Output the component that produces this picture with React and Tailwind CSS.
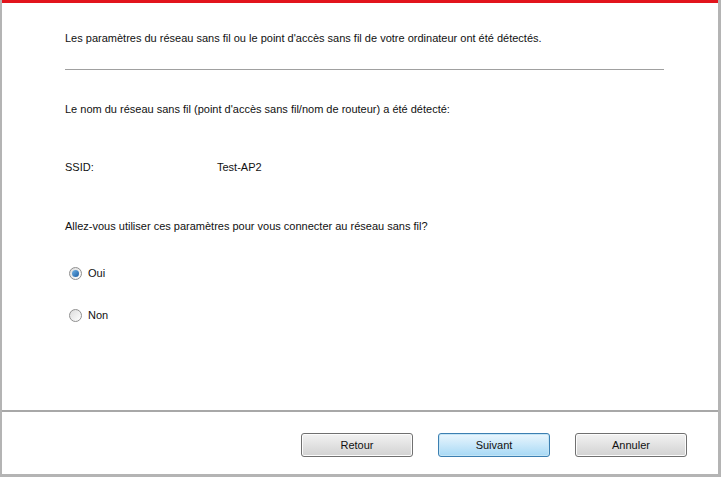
export default function App() {
  const font = { fontFamily: '"Liberation Sans", Arial, sans-serif' };
  const Radio = ({ checked }) => (
    <span className="relative inline-block w-[13px] h-[13px] rounded-full border border-[#8f8f8f] bg-gradient-to-br from-[#dcdcdc] to-[#ffffff]">
      {checked && (
        <span className="absolute left-[2px] top-[2px] w-[7px] h-[7px] rounded-full bg-gradient-to-br from-[#6fb2e6] to-[#1a5ea3]" />
      )}
    </span>
  );
  const Btn = ({ children, primary }) => (
    <div
      className={
        "w-[112px] h-[24px] flex items-center justify-center rounded-[3px] text-[11px] text-[#111] " +
        (primary
          ? "border border-[#3c7fb1] bg-gradient-to-b from-[#eaf6fd] to-[#a7d9f5] shadow-[inset_0_0_0_1px_#c4e5f6]"
          : "border border-[#707070] bg-gradient-to-b from-[#f2f2f2] to-[#d2d2d2] shadow-[inset_0_0_0_1px_#fcfcfc]")
      }
    >
      {children}
    </div>
  );
  return (
    <div className="w-[721px] h-[477px] bg-[#b4b4b4] pl-[2px] pr-[3px] pb-[3px] flex flex-col" style={font}>
      <div className="h-[3px] bg-[#e2141c]" />
      <div className="flex-1 bg-white flex flex-col text-[11px] text-[#111]">
        <div className="h-[407px] flex flex-col px-[63px]">
          <div className="mt-[28px] leading-[14px]">Les paramètres du réseau sans fil ou le point d'accès sans fil de votre ordinateur ont été détectés.</div>
          <div className="mt-[24px] h-px bg-[#a0a0a0] w-[599px]" />
          <div className="mt-[32px] leading-[14px]">Le nom du réseau sans fil (point d'accès sans fil/nom de routeur) a été détecté:</div>
          <div className="mt-[44px] leading-[14px] flex">
            <span className="w-[152px]">SSID:</span>
            <span>Test-AP2</span>
          </div>
          <div className="mt-[45px] leading-[14px]">Allez-vous utiliser ces paramètres pour vous connecter au réseau sans fil?</div>
          <div className="mt-[33px] flex items-center gap-[6px] leading-[14px] ml-[4px]">
            <Radio checked />
            <span>Oui</span>
          </div>
          <div className="mt-[28px] flex items-center gap-[6px] leading-[14px] ml-[4px]">
            <Radio />
            <span>Non</span>
          </div>
        </div>
        <div className="h-[2px] bg-[#a8a8a8]" />
        <div className="flex-1 flex items-start pt-[21px] pl-[299px] gap-[25px]">
          <Btn>Retour</Btn>
          <Btn primary>Suivant</Btn>
          <Btn>Annuler</Btn>
        </div>
      </div>
    </div>
  );
}
